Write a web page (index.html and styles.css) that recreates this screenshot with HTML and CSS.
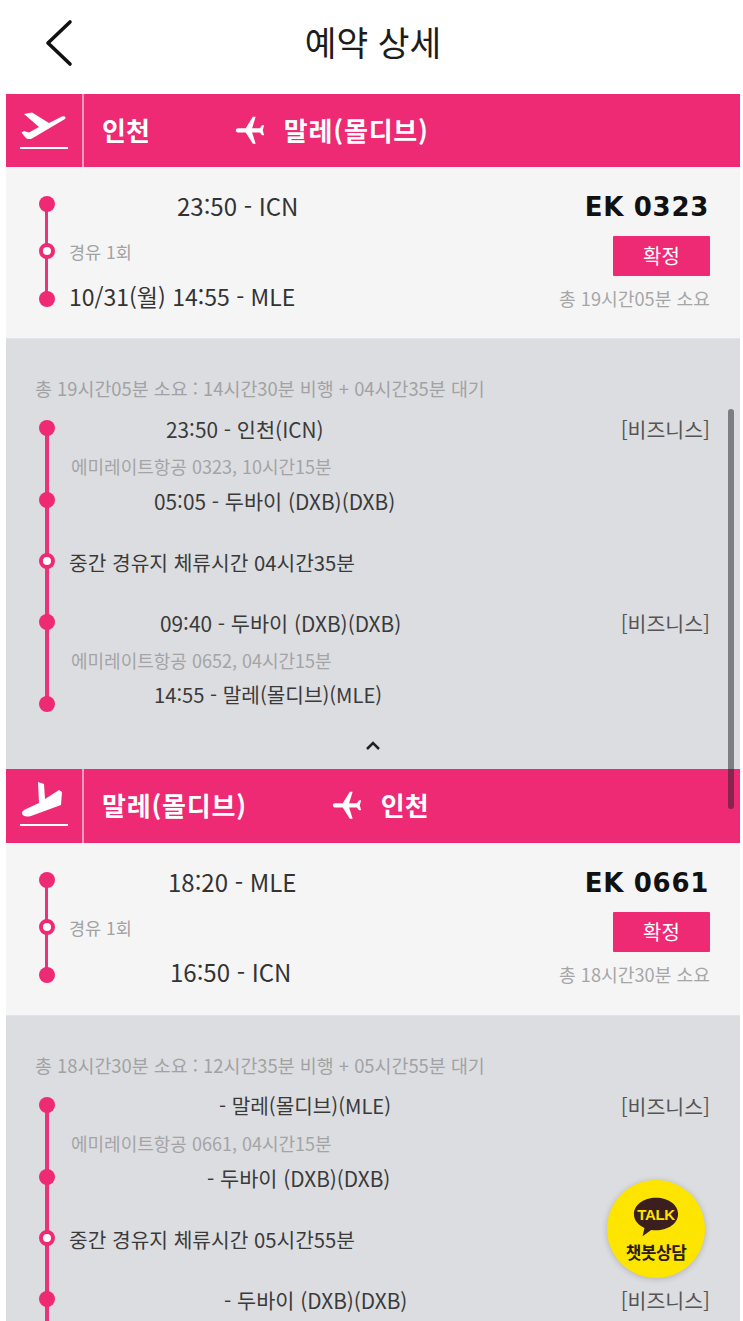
FILE: index.html
```html
<!DOCTYPE html>
<html lang="ko">
<head>
<meta charset="utf-8">
<title>예약 상세</title>
<link rel="stylesheet" href="styles.css">
</head>
<body>
<div class="page">
  <header class="topbar">
    <svg class="back" viewBox="0 0 30 48" aria-hidden="true"><path d="M26 3 L4 24 L26 45" /></svg>
    <h1>예약 상세</h1>
  </header>

  <section class="bar">
    <div class="bar-icon">
      <svg class="icon-off" viewBox="20 108 50 44" aria-hidden="true"><path d="M25 113 L33 111.500 L50 122 L63 115.500 C66 114.500 67.500 116.500 66 118 L33 137.500 C30 139 27 137.500 26 136 L22.500 131.500 L25 130 L30 131.500 L40 126 Z"/><rect x="21" y="146" width="48" height="2"/></svg>
    </div>
    <div class="bar-route">
      <span class="city">인천</span>
      <svg class="plane plane-a" viewBox="0 0 24 24" aria-hidden="true"><path d="M16 21h-2l-5-8H3.500C2.670 13 2 12.330 2 11.500S2.670 10 3.500 10H9l5-8h2l-2.500 8H19l1.500-2H22l-1 3.500 1 3.500h-1.500L19 13h-5.500z"/></svg>
      <span class="city city-long">말레(몰디브)</span>
    </div>
  </section>

  <section class="summary">
    <div class="sum-route">
      <div class="sum-row"><i class="dot"></i><span class="sum-time pad-108">23:50 - ICN</span></div>
      <div class="sum-row"><i class="dot hollow"></i><span class="stops">경유 1회</span></div>
      <div class="sum-row"><i class="dot"></i><span class="sum-time sum-small">10/31(월) 14:55 - MLE</span></div>
    </div>
    <div class="sum-side">
      <div class="flight-no">EK 0323</div>
      <div class="badge">확정</div>
      <div class="total">총 19시간05분 소요</div>
    </div>
  </section>

  <section class="detail detail-open">
    <p class="detail-head">총 19시간05분 소요 : 14시간30분 비행 + 04시간35분 대기</p>
    <div class="legs">
      <div class="leg"><i class="dot"></i><span class="pad-97">23:50 - 인천(ICN)</span><em>[비즈니스]</em></div>
      <div class="leg-note">에미레이트항공 0323, 10시간15분</div>
      <div class="leg"><i class="dot"></i><span class="pad-85">05:05 - 두바이 (DXB)(DXB)</span></div>
      <div class="leg stop"><i class="dot hollow"></i><span>중간 경유지 체류시간 04시간35분</span></div>
      <div class="leg"><i class="dot"></i><span class="pad-91">09:40 - 두바이 (DXB)(DXB)</span><em>[비즈니스]</em></div>
      <div class="leg-note">에미레이트항공 0652, 04시간15분</div>
      <div class="leg last"><i class="dot"></i><span class="pad-85 narrow">14:55 - 말레(몰디브)(MLE)</span></div>
    </div>
    <svg class="chevron" viewBox="0 0 16 10" aria-hidden="true"><path d="M2 8 L8 2 L14 8"/></svg>
  </section>

  <section class="bar bar-tall">
    <div class="bar-icon">
      <svg class="icon-land" viewBox="20 779 50 48" aria-hidden="true"><path d="M39 782 L45 784 L46 799 L60 790 L63 792 L62 805 L32 816 C27 817.500 23 816 23 813 C23 811 25 810 27 809 L40 803 Z"/><rect x="21" y="824" width="48" height="2"/></svg>
    </div>
    <div class="bar-route">
      <span class="city city-long">말레(몰디브)</span>
      <svg class="plane plane-b" viewBox="0 0 24 24" aria-hidden="true"><path d="M16 21h-2l-5-8H3.500C2.670 13 2 12.330 2 11.500S2.670 10 3.500 10H9l5-8h2l-2.500 8H19l1.500-2H22l-1 3.500 1 3.500h-1.500L19 13h-5.500z"/></svg>
      <span class="city">인천</span>
    </div>
  </section>

  <section class="summary summary-tall">
    <div class="sum-route">
      <div class="sum-row"><i class="dot"></i><span class="sum-time pad-99">18:20 - MLE</span></div>
      <div class="sum-row"><i class="dot hollow"></i><span class="stops">경유 1회</span></div>
      <div class="sum-row"><i class="dot"></i><span class="sum-time pad-101">16:50 - ICN</span></div>
    </div>
    <div class="sum-side">
      <div class="flight-no">EK 0661</div>
      <div class="badge">확정</div>
      <div class="total">총 18시간30분 소요</div>
    </div>
  </section>

  <section class="detail">
    <p class="detail-head">총 18시간30분 소요 : 12시간35분 비행 + 05시간55분 대기</p>
    <div class="legs legs-cut">
      <div class="leg"><i class="dot"></i><span class="pad-150 narrow">- 말레(몰디브)(MLE)</span><em>[비즈니스]</em></div>
      <div class="leg-note">에미레이트항공 0661, 04시간15분</div>
      <div class="leg"><i class="dot"></i><span class="pad-138">- 두바이 (DXB)(DXB)</span></div>
      <div class="leg stop"><i class="dot hollow"></i><span>중간 경유지 체류시간 05시간55분</span></div>
      <div class="leg"><i class="dot"></i><span class="pad-155">- 두바이 (DXB)(DXB)</span><em>[비즈니스]</em></div>
    </div>
  </section>

  <div class="scrollbar"></div>

  <div class="kakao">
    <svg viewBox="0 0 50 42" aria-hidden="true"><path d="M25 1C12 1 2 8.500 2 18c0 6.500 4.500 11.500 11 14.500L11 41l9-6.500c1.600.2 3.300.4 5 .4 13 0 23-7.500 23-17S38 1 25 1z"/></svg>
    <span class="kakao-talk">TALK</span>
    <span class="kakao-label">챗봇상담</span>
  </div>
</div>
</body>
</html>
```
FILE: styles.css
```css
* { box-sizing: border-box; }
html, body { margin: 0; padding: 0; background: #fff; }
body {
  width: 743px;
  height: 1321px;
  overflow: hidden;
  font-family: "Noto Sans CJK KR", "Noto Sans", sans-serif;
  color: #333;
}
.page { position: relative; width: 743px; height: 1321px; overflow: hidden; padding: 0 3px 0 6px; }

.topbar { height: 94px; display: flex; align-items: center; justify-content: center; position: relative; padding-bottom: 11px; }
.topbar h1 { margin: 0; font-size: 34.500px; font-weight: 400; color: #1c1c1c; letter-spacing: 0; line-height: 1; }
.back { position: absolute; left: 38px; top: 19px; width: 30px; height: 48px; fill: none; stroke: #111; stroke-width: 3.600; stroke-linecap: round; stroke-linejoin: round; }

.bar { height: 73px; background: #ee2a74; display: flex; align-items: stretch; color: #fff; }
.bar-tall { height: 74px; }
.bar-icon { width: 78px; border-right: 2px solid #f89cbd; display: flex; align-items: center; justify-content: center; }
.icon-off { width: 50px; height: 44px; fill: #fff; margin-left: 14px; margin-right: 14px; flex: none; }
.icon-land { width: 50px; height: 48px; fill: #fff; margin-left: 14px; margin-right: 14px; margin-bottom: 6px; flex: none; }
.bar-route { flex: 1; display: flex; align-items: center; padding-left: 18px; }
.city { font-size: 26px; font-weight: 700; line-height: 1; padding-bottom: 2px; }
.city-long { letter-spacing: .8px; }
.plane { width: 34px; height: 34px; fill: #fff; }
.plane-a { margin-left: 83px; margin-right: 17px; }
.plane-b { margin-left: 83px; margin-right: 17px; }

.summary { height: 172px; background: #f5f5f6; display: flex; justify-content: space-between; padding: 13px 30px 0 33px; border-bottom: 1px solid #e4e4e6; }
.summary-tall { height: 173px; }
.sum-route { position: relative; }
.sum-route::before { content: ""; position: absolute; left: 6px; top: 24px; height: 95px; width: 3px; background: #e8347a; }
.sum-row { height: 47.500px; display: flex; align-items: center; gap: 14px; position: relative; }
.dot { flex: none; width: 16px; height: 16px; border-radius: 50%; background: #ee2a74; display: block; position: relative; }
.dot.hollow { background: #fff; border: 4px solid #ee2a74; }
.sum-time { font-size: 24px; line-height: 1; color: #333; padding-top: 5px; white-space: nowrap; }
.sum-row:last-child .sum-time { padding-top: 0; padding-bottom: 5px; }
.sum-small { font-size: 23px; }
.stops { font-size: 17.500px; line-height: 1; color: #a2a2a2; }
.pad-108 { padding-left: 108px; }
.pad-99 { padding-left: 99px; }
.pad-101 { padding-left: 101px; }

.sum-side { display: flex; flex-direction: column; align-items: flex-end; }
.flight-no { font-family: "DejaVu Sans", sans-serif; font-weight: 700; font-size: 26px; letter-spacing: .7px; line-height: 30px; color: #111; margin-top: 12px; margin-right: 1px; }
.badge { width: 97px; height: 40px; margin-top: 14px; background: #ee2a74; color: #fff; font-size: 20px; display: flex; align-items: center; justify-content: center; line-height: 1; border-radius: 1px; }
.total { font-size: 18.200px; line-height: 24px; color: #a6a6a6; margin-top: 10px; white-space: nowrap; }

.detail { height: 430px; background: #dcdde0; padding: 37px 30px 0 29px; position: relative; }
.detail-head { margin: 0; font-size: 18.400px; line-height: 24px; color: #a2a2a4; white-space: nowrap; }
.legs { margin-top: 10px; position: relative; padding-left: 4px; }
.legs::before { content: ""; position: absolute; left: 10px; top: 18px; bottom: 8px; width: 4px; background: #e8347a; }
.legs-cut::before { bottom: -40px; }
.leg { height: 36px; display: flex; align-items: center; gap: 14px; position: relative; font-size: 20.800px; color: #3a3a3a; white-space: nowrap; }
.leg span { line-height: 1; padding-top: 2px; }
.leg .narrow { font-size: 20.200px; }
.leg em { font-style: normal; margin-left: auto; color: #555; font-size: 20.500px; line-height: 1; padding-top: 3px; }
.leg-note { height: 36px; display: flex; align-items: center; padding: 3px 0 0 32px; font-size: 18px; color: #a4a4a6; white-space: nowrap; }
.stop { margin: 25px 0; font-size: 20.300px; }
.last .dot { top: 10px; }
.pad-97 { padding-left: 97px; }
.pad-85 { padding-left: 85px; }
.pad-91 { padding-left: 91px; }
.pad-150 { padding-left: 150px; }
.pad-138 { padding-left: 138px; }
.pad-155 { padding-left: 155px; }

.chevron { position: absolute; left: 359px; top: 402px; width: 16px; height: 10px; fill: none; stroke: #222; stroke-width: 2.500; }

.scrollbar { position: absolute; left: 728px; top: 409px; width: 6px; height: 400px; border-radius: 3px; background: rgba(30, 30, 40, .5); }

.kakao { position: absolute; left: 607px; top: 1180px; width: 98px; height: 98px; border-radius: 50%; background: #fde500; box-shadow: 0 1px 6px rgba(0, 0, 0, .2); }
.kakao svg { position: absolute; left: 25px; top: 16px; width: 48px; height: 42px; fill: #3b1f1e; }
.kakao-talk { position: absolute; left: 0; right: 0; top: 27px; text-align: center; font-family: "Liberation Sans", sans-serif; font-weight: 700; font-size: 15px; line-height: 16px; color: #fde500; letter-spacing: -.3px; }
.kakao-label { position: absolute; left: 0; right: 0; top: 62px; text-align: center; font-size: 17px; font-weight: 700; line-height: 20px; color: #2b1a14; letter-spacing: -.5px; }
```
